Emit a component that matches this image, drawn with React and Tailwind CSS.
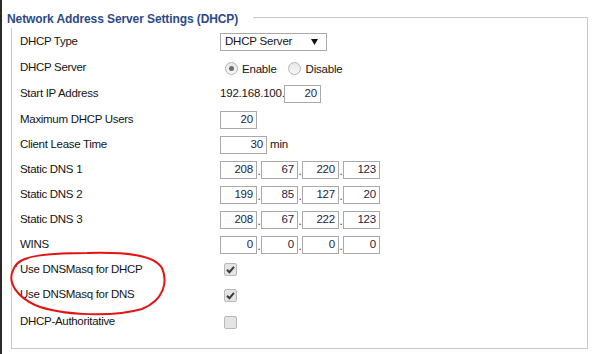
import React from "react";

const font = { fontFamily: '"Liberation Sans", Arial, sans-serif' };

function Box({ w = "w-[37px]", v }) {
  return (
    <div className={`${w} h-[18px] border border-[#a9a9a9] bg-white flex items-center justify-end pr-[3px] text-[11.5px] tracking-[-0.2px] text-[#1e2540]`}>
      {v}
    </div>
  );
}

function Dot() {
  return <span className="w-[4px] text-center text-[12px] text-[#8b1a1a] leading-none self-end pb-[2px]">.</span>;
}

function Quad({ vals }) {
  return (
    <div className="flex items-center">
      <Box v={vals[0]} />
      <Dot />
      <Box v={vals[1]} />
      <Dot />
      <Box v={vals[2]} />
      <Dot />
      <Box v={vals[3]} />
    </div>
  );
}

function Radio({ checked }) {
  return (
    <div className="w-[13px] h-[13px] rounded-full border border-[#b5b5b5] bg-gradient-to-b from-[#e8e8e8] to-[#f6f6f6] flex items-center justify-center">
      {checked && <div className="w-[5px] h-[5px] rounded-full bg-[#6d6d6d]" />}
    </div>
  );
}

function Check({ checked }) {
  return (
    <div className="ml-[4px] w-[13px] h-[13px] rounded-[2px] border border-[#b8b8b8] bg-[#e4e4e4] flex items-center justify-center">
      {checked && (
        <svg width="11" height="11" viewBox="0 0 11 11">
          <path d="M2 5.8 L4.4 8.2 L9 2.8" fill="none" stroke="#3a3a3a" strokeWidth="2" />
        </svg>
      )}
    </div>
  );
}

function Row({ h = "h-[25px]", label, children }) {
  return (
    <div className={`flex items-center ${h}`}>
      <div className="w-[200px] text-[11.5px] tracking-[-0.3px] text-[#141414]">{label}</div>
      <div className="flex items-center text-[11.5px] tracking-[-0.2px] text-[#141414]">{children}</div>
    </div>
  );
}

export default function App() {
  return (
    <div className="relative w-[596px] h-[354px] bg-white border-l-2 border-[#2a2a2a] overflow-hidden" style={font}>
      <div className="pl-[9px] pt-[17px] pr-[8px]">
        <div className="relative h-[332px] border border-[#c8c8c8] pt-[11px] pl-[8px]">
          <div className="absolute left-[-11px] top-[-9px] h-[19px] w-[252px] bg-white flex items-center pl-[6px] text-[12px] font-bold text-[#2c4a86] tracking-[-0.1px]">
            Network Address Server Settings (DHCP)
          </div>
          <Row h="h-[26px]" label="DHCP Type">
            <div className="w-[107px] h-[18px] border border-[#a9a9a9] bg-white flex items-center justify-between pl-[4px] pr-[8px]">
              <span>DHCP Server</span>
              <svg width="7" height="6" viewBox="0 0 7 6">
                <path d="M0 0 H7 L3.5 6 Z" fill="#111" />
              </svg>
            </div>
          </Row>
          <Row h="h-[26px]" label="DHCP Server">
            <div className="flex items-center pl-[5px]">
              <Radio checked />
              <span className="ml-[4px] mt-[3px]">Enable</span>
              <div className="ml-[11px]">
                <Radio />
              </div>
              <span className="ml-[5px] mt-[3px]">Disable</span>
            </div>
          </Row>
          <Row h="h-[26px]" label="Start IP Address">
            <span className="w-[64px] whitespace-nowrap">192.168.100.</span>
            <Box v="20" />
          </Row>
          <Row label="Maximum DHCP Users">
            <Box v="20" />
          </Row>
          <Row label="Client Lease Time">
            <Box w="w-[47px]" v="30" />
            <span className="ml-[3px]">min</span>
          </Row>
          <Row label="Static DNS 1">
            <Quad vals={["208", "67", "220", "123"]} />
          </Row>
          <Row label="Static DNS 2">
            <Quad vals={["199", "85", "127", "20"]} />
          </Row>
          <Row label="Static DNS 3">
            <Quad vals={["208", "67", "222", "123"]} />
          </Row>
          <Row label="WINS">
            <Quad vals={["0", "0", "0", "0"]} />
          </Row>
          <Row label="Use DNSMasq for DHCP">
            <Check checked />
          </Row>
          <Row h="h-[26px]" label="Use DNSMasq for DNS">
            <Check checked />
          </Row>
          <Row h="h-[28px]" label="DHCP-Authoritative">
            <Check />
          </Row>
        </div>
      </div>
      <svg className="absolute left-0 top-0 pointer-events-none" width="596" height="354" viewBox="0 0 596 354">
        <path
          d="M14 266 C16 256, 45 253, 85 253 C125 252, 152 255, 160 268 C166 282, 162 300, 140 309 C112 317, 60 316, 33 305 C14 296, 7 283, 10 273 C12 265, 18 260, 26 258"
          fill="none"
          stroke="#e31414"
          strokeWidth="2"
          strokeLinecap="round"
        />
      </svg>
    </div>
  );
}
